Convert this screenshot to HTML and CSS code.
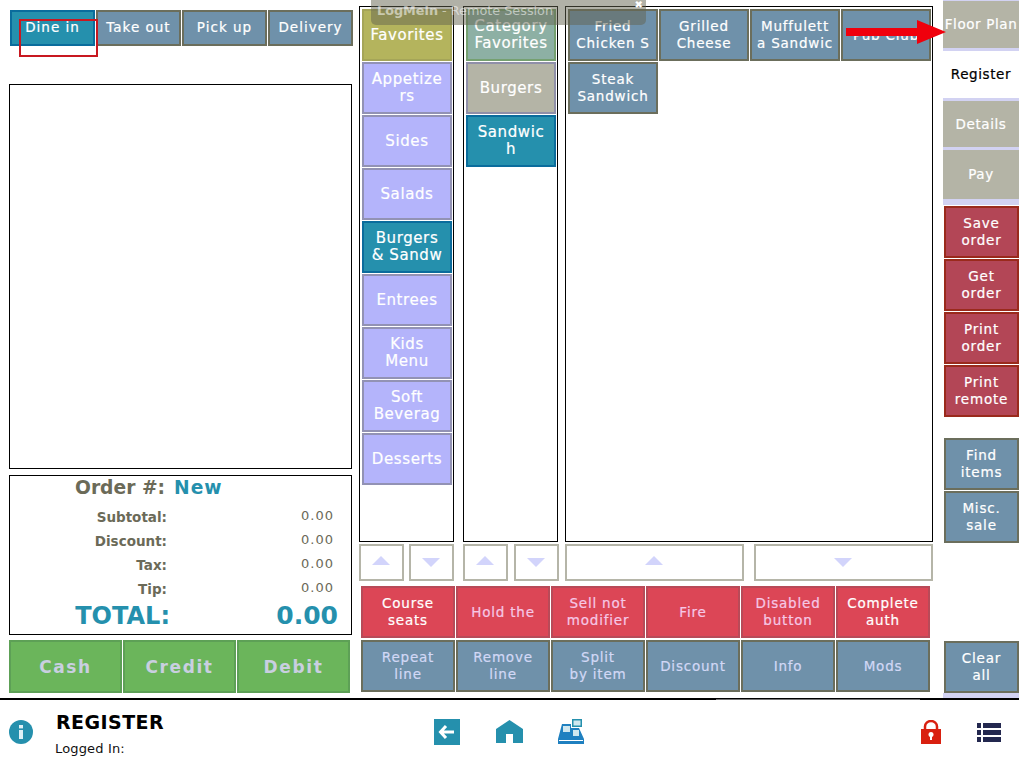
FILE: index.html
```html
<!DOCTYPE html>
<html lang="en">
<head>
<meta charset="utf-8">
<title>Register</title>
<link rel="stylesheet" href="styles.css">
</head>
<body>
<div class="app">
  <div class="main">
    <section class="left">
      <div class="tabs">
        <div class="btn teal">Dine in</div>
        <div class="btn slate">Take out</div>
        <div class="btn slate">Pick up</div>
        <div class="btn slate">Delivery</div>
      </div>
      <div class="orderlist"></div>
      <div class="summary">
        <div class="order-line"><span class="order-label">Order #:</span><span class="order-val">New</span></div>
        <div class="sum-lines">
          <div class="sum-line"><span class="sum-label">Subtotal:</span><span class="sum-val">0.00</span></div>
          <div class="sum-line"><span class="sum-label">Discount:</span><span class="sum-val">0.00</span></div>
          <div class="sum-line"><span class="sum-label">Tax:</span><span class="sum-val">0.00</span></div>
          <div class="sum-line"><span class="sum-label">Tip:</span><span class="sum-val">0.00</span></div>
        </div>
        <div class="total-line"><span class="total-label">TOTAL:</span><span class="total-val">0.00</span></div>
      </div>
      <div class="pay">
        <div class="btn green">Cash</div>
        <div class="btn green">Credit</div>
        <div class="btn green">Debit</div>
      </div>
    </section>

    <section class="center">
      <div class="lists">
        <div class="list list-cat">
          <div class="btn olive">Favorites</div>
          <div class="btn lilac">Appetize<br>rs</div>
          <div class="btn lilac">Sides</div>
          <div class="btn lilac">Salads</div>
          <div class="btn teal">Burgers<br>&amp; Sandw</div>
          <div class="btn lilac">Entrees</div>
          <div class="btn lilac">Kids<br>Menu</div>
          <div class="btn lilac">Soft<br>Beverag</div>
          <div class="btn lilac">Desserts</div>
        </div>
        <div class="list list-sub">
          <div class="btn sage">Category<br>Favorites</div>
          <div class="btn stone">Burgers</div>
          <div class="btn teal">Sandwic<br>h</div>
        </div>
        <div class="list list-items">
          <div class="btn slate small">Fried<br>Chicken S</div>
          <div class="btn slate small">Grilled<br>Cheese</div>
          <div class="btn slate small">Muffulett<br>a Sandwic</div>
          <div class="btn slate small">Pub Club</div>
          <div class="btn slate small">Steak<br>Sandwich</div>
        </div>
      </div>
      <div class="pagers">
        <div class="pager p-cat"><span class="arrow up"></span></div>
        <div class="pager p-cat"><span class="arrow down"></span></div>
        <div class="pager p-cat gap-l"><span class="arrow up"></span></div>
        <div class="pager p-cat gap-s"><span class="arrow down"></span></div>
        <div class="pager p-wide gap-m"><span class="arrow up"></span></div>
        <div class="pager p-wide"><span class="arrow down"></span></div>
      </div>
      <div class="actions">
        <div class="btn red small">Course<br>seats</div>
        <div class="btn red small dim">Hold the</div>
        <div class="btn red small dim">Sell not<br>modifier</div>
        <div class="btn red small dim">Fire</div>
        <div class="btn red small dim">Disabled<br>button</div>
        <div class="btn red small">Complete<br>auth</div>
        <div class="btn slate small soft">Repeat<br>line</div>
        <div class="btn slate small soft">Remove<br>line</div>
        <div class="btn slate small soft">Split<br>by item</div>
        <div class="btn slate small soft">Discount</div>
        <div class="btn slate small soft">Info</div>
        <div class="btn slate small soft">Mods</div>
      </div>
    </section>

    <aside class="side">
      <div class="side-tab">Floor Plan</div>
      <div class="side-tab active">Register</div>
      <div class="side-tab">Details</div>
      <div class="side-tab last">Pay</div>
      <div class="side-group reds">
        <div class="btn wine small">Save<br>order</div>
        <div class="btn wine small">Get<br>order</div>
        <div class="btn wine small">Print<br>order</div>
        <div class="btn wine small">Print<br>remote</div>
      </div>
      <div class="side-group blues">
        <div class="btn slate small">Find<br>items</div>
        <div class="btn slate small">Misc.<br>sale</div>
      </div>
      <div class="btn slate small clear">Clear<br>all</div>
      <div class="side-end"></div>
    </aside>
  </div>

  <footer class="footer">
    <div class="foot-left">
      <svg class="info" width="24" height="24" viewBox="0 0 24 24"><circle cx="12" cy="12" r="12" fill="#2590ad"/><rect x="10" y="10" width="4" height="9" fill="#dff1f6"/><rect x="10" y="5" width="4" height="3.4" fill="#dff1f6"/></svg>
      <div class="foot-text">
        <div class="foot-title">REGISTER</div>
        <div class="foot-sub">Logged In:</div>
      </div>
    </div>
    <div class="foot-mid">
      <svg width="26" height="26" viewBox="0 0 26 26"><rect width="26" height="26" fill="#2590ad"/><path d="M12 7 L6.500 13 L12 19 M7 13 H20" fill="none" stroke="#fff" stroke-width="3"/></svg>
      <svg class="home" width="27" height="24" viewBox="0 0 27 24"><path d="M13.500 0 L27 9 V23 H17 V14 H10 V23 H0 V9 Z" fill="#2590ad"/></svg>
      <svg width="26" height="26" viewBox="0 0 26 26"><rect x="14" y="0" width="10" height="8" fill="#2590ad"/><rect x="15.500" y="1.500" width="7" height="5" fill="#cfe7ef"/><path d="M4 5 H13 V9 H21 L26 20 V25 H0 V20 Z" fill="#1f80c0"/><rect x="5" y="7" width="7" height="6" fill="#cfe7ef"/><rect x="15" y="11" width="6" height="6" fill="#cfe7ef"/><rect x="1" y="21" width="24" height="1" fill="#fff"/></svg>
    </div>
    <div class="foot-right">
      <svg width="20" height="24" viewBox="0 0 20 24"><path d="M4 10 V6.500 a6 5.500 0 0 1 12 0 V10" fill="none" stroke="#d92010" stroke-width="2.500"/><rect y="9" width="20" height="15" fill="#d92010"/><circle cx="10" cy="14.500" r="2.500" fill="#fff"/><rect x="9" y="15" width="2" height="5" fill="#fff"/></svg>
      <svg class="menu" width="24" height="19" viewBox="0 0 24 19"><g fill="#23284f"><rect width="4" height="5"/><rect x="6" width="18" height="5"/><rect y="7" width="4" height="5"/><rect x="6" y="7" width="18" height="5"/><rect y="14" width="4" height="5"/><rect x="6" y="14" width="18" height="5"/></g></svg>
    </div>
  </footer>

  <div class="session"><span class="session-brand">LogMein</span> - Remote Session<span class="session-x">&#10006;</span></div>
  <div class="mark-box"></div>
  <svg class="mark-arrow" width="100" height="24" viewBox="0 0 100 24"><path d="M0 8 H71 V0 L100 12 L71 24 V16 H0 Z" fill="#f0000c"/></svg>
</div>
</body>
</html>
```
FILE: styles.css
```css
* { box-sizing: border-box; }
html, body { margin: 0; padding: 0; background: #fff; }
.app {
  position: relative;
  width: 1019px;
  height: 766px;
  overflow: hidden;
  font-family: "DejaVu Sans", Verdana, sans-serif;
}
.main {
  display: flex;
  height: 698px;
}
.btn {
  display: flex;
  align-items: center;
  justify-content: center;
  text-align: center;
  color: #fff;
  font-size: 15px;
  line-height: 17px;
  letter-spacing: 0.6px;
  -webkit-text-stroke: 0.2px currentColor;
  border: 2px solid transparent;
  overflow: hidden;
  white-space: nowrap;
}
.small { font-size: 13.5px; letter-spacing: 0.8px; }
.teal { background: #2590ad; border-color: #0a6c9c; }
.slate { background: #6f91aa; border-color: #6b6e5c; }
.soft { color: #d2d8f6; }
.olive { background: #b4b45d; border-color: #a5a558; }
.lilac { background: #b4b4fb; border-color: #9292b4; }
.sage { background: #8db0a4; border-color: #75a070; }
.stone { background: #b4b4a6; border-color: #8f8fa8; }
.red { background: #dc4656; border-color: #b84a58; }
.dim { color: #f6c8e6; }
.wine { background: #b34656; border-color: #9a2a1c; }
.green { background: #6bb55b; border-color: #5da056; color: #c9cfe0; font-size: 17px; font-weight: bold; letter-spacing: 1.600px; padding-top: 1px; -webkit-text-stroke: 0; }

/* left column */
.left { width: 359px; padding: 10px 0 0 9px; display: flex; flex-direction: column; }
.tabs { display: grid; grid-template-columns: repeat(4, 85px); gap: 1px; height: 36px; margin-left: 1px; }
.tabs .btn { font-size: 13.500px; letter-spacing: 1px; padding-bottom: 2px; }
.orderlist { margin-top: 38px; width: 343px; height: 385px; border: 1px solid #000; }
.summary { margin-top: 6px; width: 343px; height: 160px; border: 1px solid #000; color: #6b6a58; font-weight: bold; }
.order-line { display: flex; height: 23px; padding-left: 65px; align-items: center; font-size: 18.700px; gap: 9px; }
.order-val { color: #2590ad; letter-spacing: 1px; }
.sum-lines { margin-top: 4px; }
.sum-line { display: flex; height: 24px; align-items: center; font-size: 13.500px; }
.sum-label { width: 157px; text-align: right; padding-top: 4px; }
.sum-val { width: 167px; text-align: right; font-weight: normal; font-size: 13px; letter-spacing: 1px; }
.total-line { display: flex; align-items: center; height: 32px; padding-top: 1px; color: #2590ad; font-size: 24px; }
.total-label { width: 160px; text-align: right; }
.total-val { width: 168px; text-align: right; font-size: 25px; }
.pay { display: grid; grid-template-columns: repeat(3, 113px); gap: 1px; margin-top: 5px; height: 53px; }

/* centre */
.center { width: 584px; padding-top: 6px; display: flex; flex-direction: column; }
.lists { display: flex; height: 536px; }
.list { border: 1px solid #000; padding: 2px; display: grid; grid-auto-rows: 52px; gap: 1px; align-content: start; }
.list-cat { width: 95px; grid-template-columns: 90px; }
.list-sub { width: 95px; margin-left: 9px; grid-template-columns: 90px; }
.list-items { width: 368px; margin-left: 7px; grid-template-columns: repeat(4, 90px); }
.pagers { display: flex; margin-top: 2px; height: 37px; }
.pager { border: 2px solid #b5b5a8; display: flex; align-items: center; justify-content: center; margin-right: 5px; }
.p-cat { width: 45px; }
.p-wide { width: 179px; }
.gap-l { margin-left: 4px; margin-right: 6px; }
.gap-s { margin-right: 6px; }
.gap-m { margin-right: 10px; }
.arrow { width: 0; height: 0; margin-right: 1px; border-left: 9px solid transparent; border-right: 9px solid transparent; }
.up { border-bottom: 9px solid #d2d4fb; margin-bottom: 5px; }
.down { border-top: 9px solid #d2d4fb; }
.actions { display: grid; grid-template-columns: repeat(6, 94px); grid-auto-rows: 52px; gap: 2px 1px; margin: 5px 0 0 2px; }

/* right */
.side { width: 76px; display: flex; flex-direction: column; }
.side-tab {
  height: 50px;
  display: flex; align-items: center; justify-content: center;
  background: #b4b4a6;
  border-top: 1px solid #d2d2f2;
  border-bottom: 2px solid #d2d2f2;
  color: #fff;
  font-size: 13.500px;
  letter-spacing: .6px;
  -webkit-text-stroke: 0.2px currentColor;
  white-space: nowrap;
}
.side-tab.active { background: #fff; color: #000; }
.side-tab.last { border-bottom: 6px solid #d2d2f2; height: 56px; padding-bottom: 2px; }
.side-group { display: grid; grid-auto-rows: 52px; gap: 1px; margin-left: 1px; }
.reds { margin-top: 1px; }
.blues { margin-top: 21px; }
.clear { height: 52px; margin: 98px 0 0 1px; }
.side-end { height: 5px; background: #d2d2f2; }

/* footer */
.footer { height: 68px; border-top: 2px solid #000; position: relative; display: flex; align-items: flex-start; }
.footer::before { content: ""; position: absolute; left: 716px; top: -1px; width: 204px; height: 1px; background: #777; }
.foot-left { width: 434px; display: flex; padding: 0 0 0 9px; }
.info { margin-top: 20px; }
.foot-text { margin-left: 22px; }
.foot-title { font-weight: bold; font-size: 19px; letter-spacing: .45px; color: #000; margin: 11px 0 0 1px; line-height: 22px; }
.foot-sub { font-size: 13px; letter-spacing: .15px; margin-top: 8px; line-height: 16px; color: #111; }
.foot-mid { display: flex; gap: 35px; padding-top: 19px; width: 487px; }
.home { margin: 1px 0 0 1px; }
.foot-right { display: flex; gap: 36px; padding-top: 20px; align-items: flex-end; }
.menu { margin-bottom: 2px; }

/* overlays */
.session {
  position: absolute; left: 371px; top: 0; width: 275px; height: 25px;
  background: rgba(100, 100, 80, 0.5);
  border-radius: 0 0 5px 5px;
  color: rgba(255, 255, 255, 0.55);
  font-size: 12.800px;
  padding: 2px 0 0 6px;
  line-height: 17px;
  white-space: nowrap;
}
.session-brand { font-weight: bold; }
.session-x { position: absolute; right: 3px; top: 0; font-size: 10px; line-height: 10px; color: #fff; }
.mark-box { position: absolute; left: 19px; top: 19px; width: 79px; height: 38px; border: 2px solid #c81820; }
.mark-arrow { position: absolute; left: 846px; top: 20px; }
```
